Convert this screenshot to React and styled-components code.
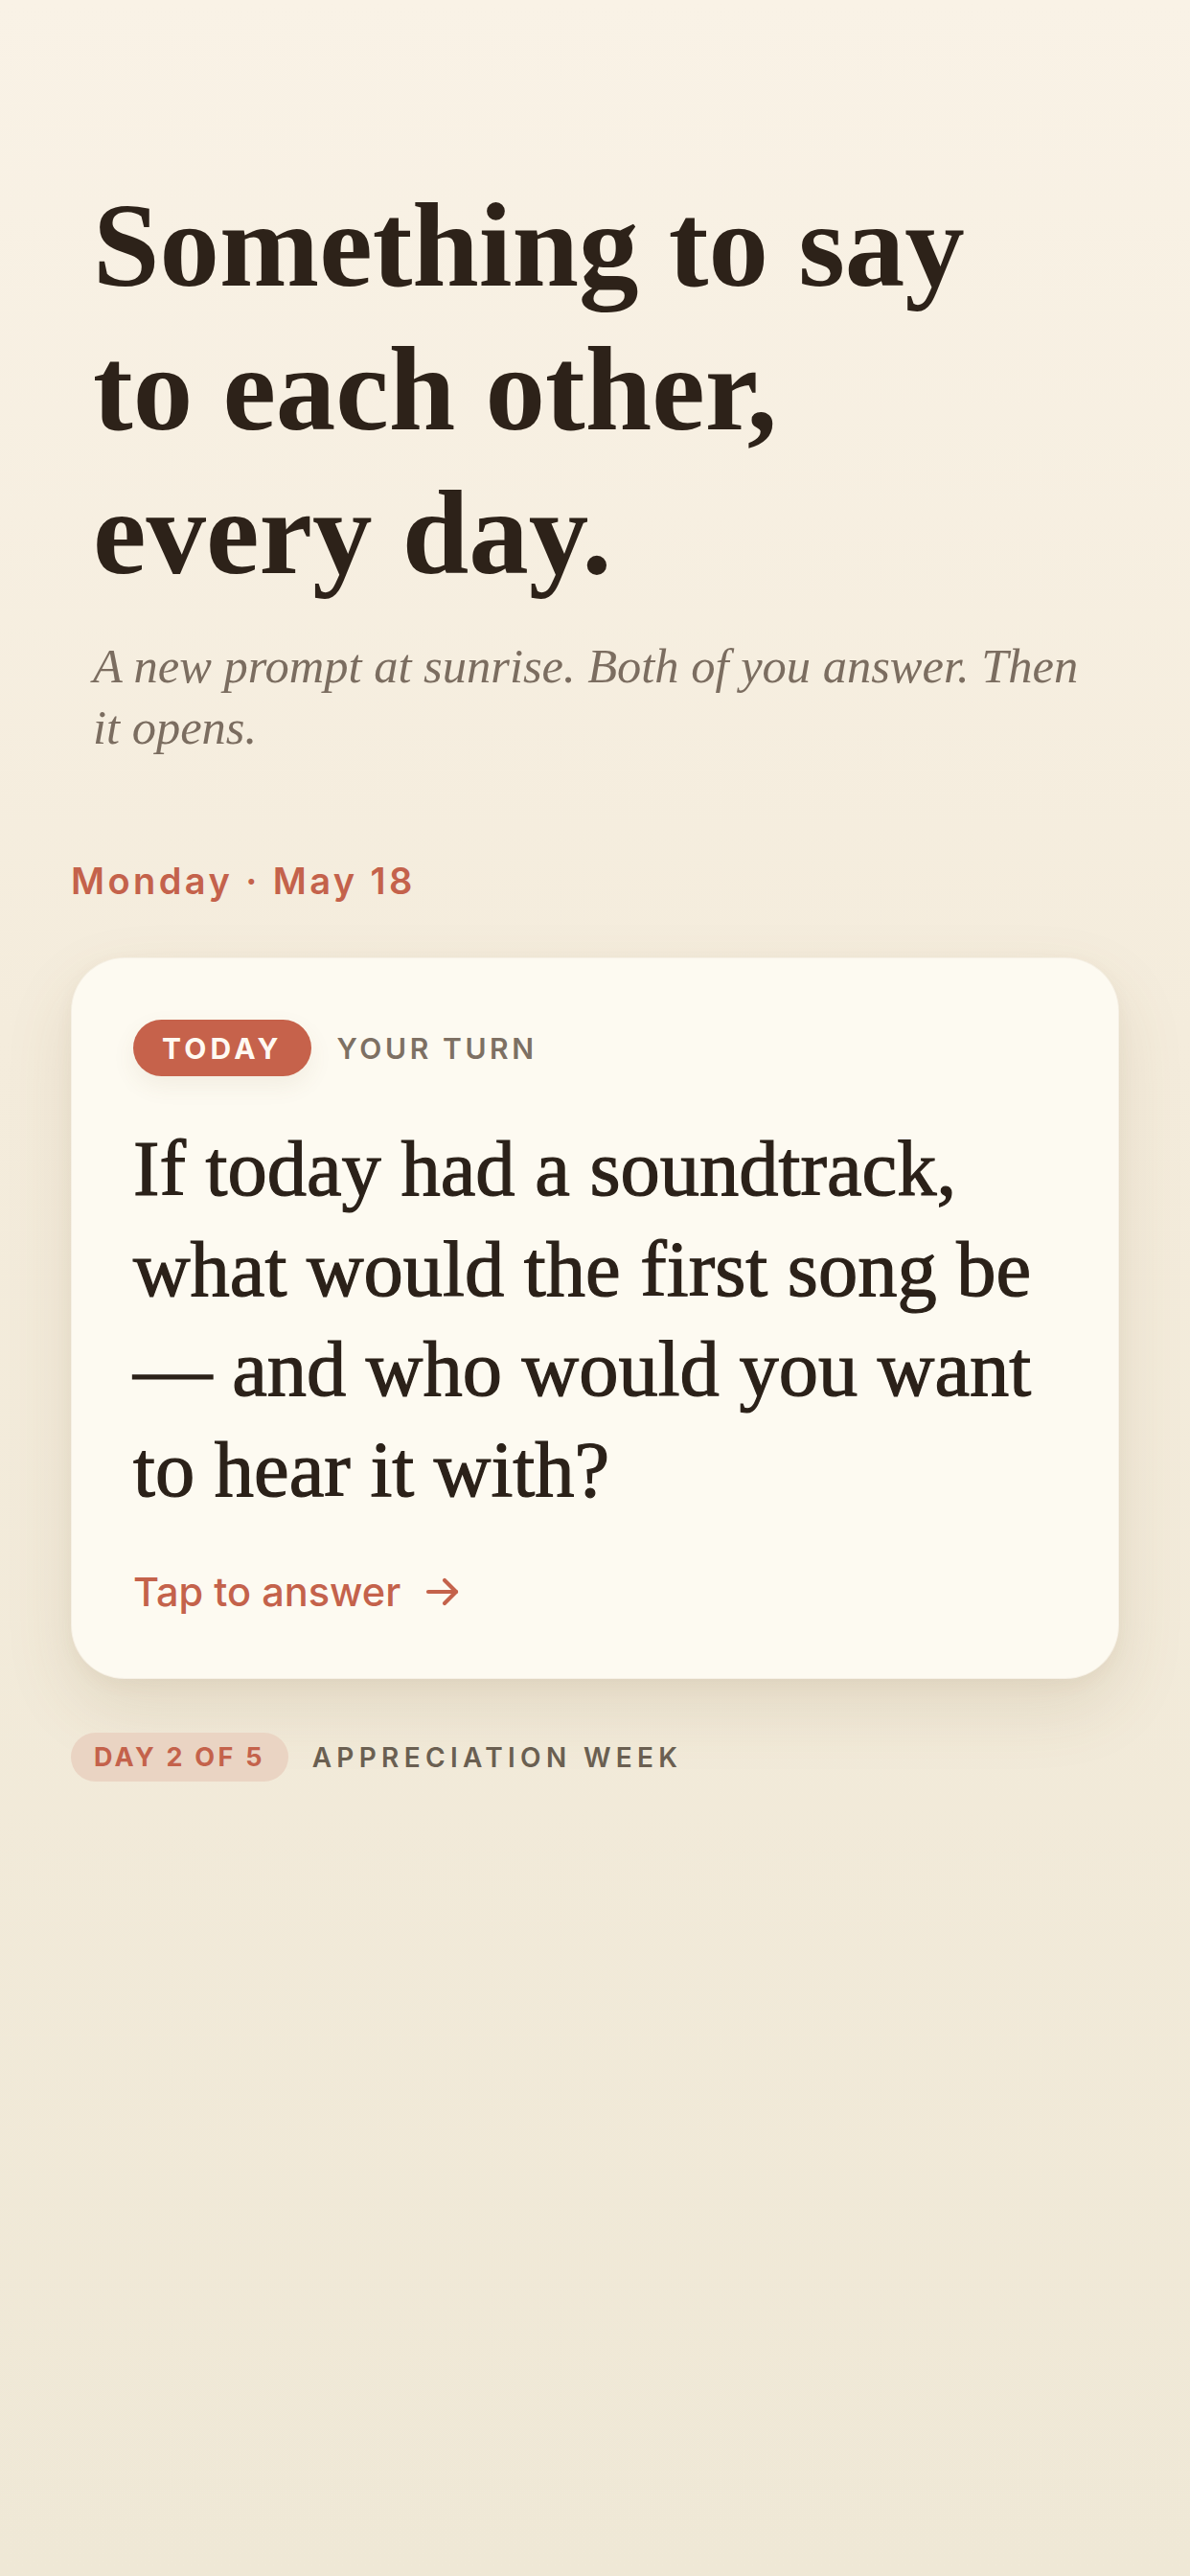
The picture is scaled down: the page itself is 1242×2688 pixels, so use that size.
import React from 'react';
import styled, {createGlobalStyle} from "styled-components";

const GlobalStyle = createGlobalStyle`
  * {
    box-sizing: border-box;
  }
  html, body {
    margin: 0;
    padding: 0;
    background: #f0e9d8;
  }
`;

const Page = styled.div`
  min-height: 2688px;
  width: 1242px;
  padding: 181px 74px 120px;
  background: linear-gradient(180deg, #f9f2e6 0%, #f4ecdc 40%, #efe8d6 100%);
  font-family: Inter, "Noto Sans", sans-serif;
`;

const Hero = styled.header`
  padding-left: 23px;
  display: flex;
  flex-direction: column;
  gap: 32px;
`;

const Title = styled.h1`
  margin: 0;
  max-width: 980px;
  font-family: "Liberation Serif", serif;
  font-weight: 700;
  font-size: 125px;
  line-height: 150px;
  color: #2d2219;
`;

const Lead = styled.p`
  margin: 0;
  max-width: 1060px;
  font-family: "Liberation Serif", serif;
  font-style: italic;
  font-size: 50.5px;
  line-height: 64px;
  color: #7b6d60;
`;

const DateLabel = styled.div`
  margin-top: 105px;
  font-size: 38px;
  line-height: 46px;
  font-weight: 600;
  letter-spacing: 0.09em;
  color: #c4624b;
`;

const Card = styled.section`
  margin-top: 57px;
  padding: 64px 64px 66px;
  background: #fdfaf1;
  border-radius: 56px;
  border: 1px solid rgba(150, 120, 70, 0.07);
  box-shadow: 0 30px 70px rgba(120, 95, 50, 0.13), 0 6px 18px rgba(120, 95, 50, 0.05);
`;

const CardTop = styled.div`
  display: flex;
  align-items: center;
  gap: 27px;
`;

const Pill = styled.span`
  display: inline-flex;
  align-items: center;
  height: ${p => p.$h}px;
  padding: 0 ${p => p.$pad}px;
  border-radius: 999px;
  background: ${p => p.$bg};
  color: ${p => p.$fg};
  font-size: ${p => p.$size}px;
  font-weight: 700;
  letter-spacing: ${p => p.$track}em;
  box-shadow: ${p => p.$shadow || 'none'};
`;

const Tag = styled.span`
  font-size: ${p => p.$size}px;
  font-weight: 600;
  letter-spacing: ${p => p.$track}em;
  color: ${p => p.$fg};
`;

const Prompt = styled.h2`
  margin: 44px 0 0;
  font-family: "Liberation Serif", serif;
  font-weight: 400;
  font-size: 82.5px;
  line-height: 104.5px;
  color: #2b2119;
  -webkit-text-stroke: 1.2px #2b2119;
`;

const Answer = styled.a`
  margin-top: 52px;
  display: inline-flex;
  align-items: center;
  gap: 26px;
  font-size: 41.5px;
  line-height: 48px;
  font-weight: 500;
  color: #c4624b;
  text-decoration: none;
  cursor: pointer;
`;

const Footer = styled.div`
  margin-top: 56px;
  display: flex;
  align-items: center;
  gap: 25px;
`;

const Arrow = () => (
    <svg width="36" height="30" viewBox="0 0 36 30" fill="none" stroke="#c4624b" strokeWidth="4.2"
         strokeLinecap="round" strokeLinejoin="round">
        <path d="M3 15h29"/>
        <path d="M20 3l12 12-12 12"/>
    </svg>
);

const App = () => {
    return (
        <>
            <GlobalStyle/>
            <Page>
                <Hero>
                    <Title>Something to say to each other, every day.</Title>
                    <Lead>A new prompt at sunrise. Both of you answer. Then it opens.</Lead>
                </Hero>

                <DateLabel>Monday · May 18</DateLabel>

                <Card>
                    <CardTop>
                        <Pill $h={59} $pad={30} $bg="#c6624b" $fg="#fffaf2" $size={30} $track={0.14}
                              $shadow="0 10px 24px rgba(120, 95, 50, 0.08)">
                            TODAY
                        </Pill>
                        <Tag $size={30} $track={0.12} $fg="#7d7063">YOUR TURN</Tag>
                    </CardTop>
                    <Prompt>
                        If today had a soundtrack, what would the first song be — and who would you want to hear it with?
                    </Prompt>
                    <Answer href={`#`}>
                        Tap to answer
                        <Arrow/>
                    </Answer>
                </Card>

                <Footer>
                    <Pill $h={51} $pad={24} $bg="#ead4c3" $fg="#c4624b" $size={27} $track={0.12}>
                        DAY 2 OF 5
                    </Pill>
                    <Tag $size={28} $track={0.19} $fg="#6a5f51">APPRECIATION WEEK</Tag>
                </Footer>
            </Page>
        </>
    );
};

export default App;
